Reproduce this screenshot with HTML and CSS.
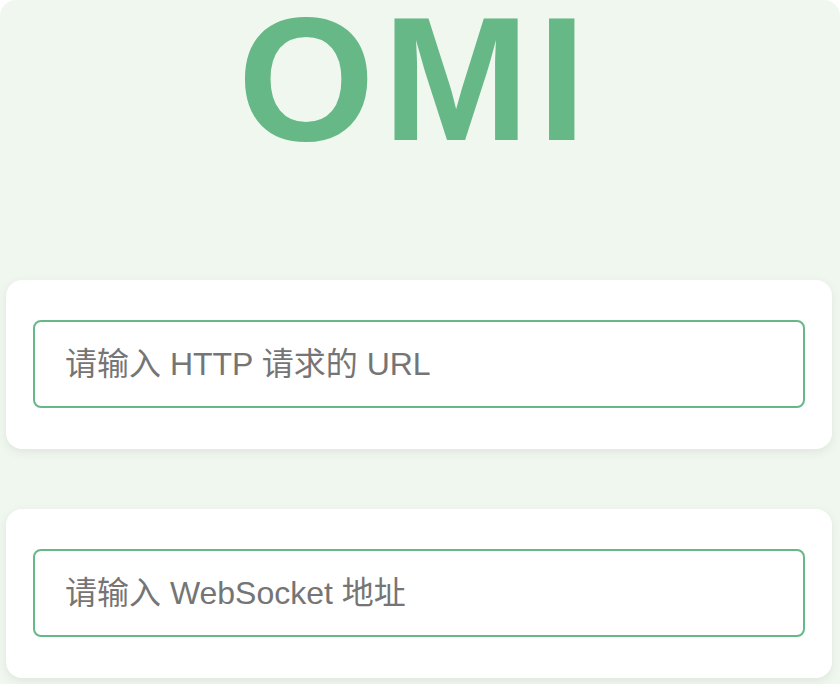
FILE: index.html
```html
<!DOCTYPE html>
<html lang="zh">
<head>
<meta charset="utf-8">
<title>OMI</title>
<link rel="stylesheet" href="styles.css">
</head>
<body>
<div class="app">
  <header class="hero">
    <h1 class="logo">OMI</h1>
  </header>
  <section class="card">
    <input class="field" type="text" placeholder="请输入 HTTP 请求的 URL">
  </section>
  <section class="card">
    <input class="field" type="text" placeholder="请输入 WebSocket 地址">
  </section>
</div>
</body>
</html>
```

FILE: styles.css
```css
html, body {
  margin: 0;
  padding: 0;
  background: #ffffff;
}

.app {
  width: 840px;
  height: 684px;
  box-sizing: border-box;
  background: #f0f7ef;
  border-radius: 16px 16px 0 0;
  padding: 0 8px 0 6px;
  display: flex;
  flex-direction: column;
  gap: 60px;
  overflow: hidden;
  font-family: "Liberation Sans", "Noto Sans CJK SC", sans-serif;
}

.hero {
  height: 220px;
  display: flex;
  justify-content: center;
  align-items: flex-start;
  padding-left: 0;
  padding-right: 6px;
}

.logo {
  margin: 0;
  font-family: "Liberation Sans", Arial, sans-serif;
  font-weight: 700;
  font-size: 176px;
  line-height: 0.9;
  letter-spacing: 8px;
  color: #66b886;
}

.card {
  background: #ffffff;
  border-radius: 16px;
  padding: 40px 27px 41px;
  box-shadow: 0 3px 10px rgba(60, 90, 70, 0.10);
}

.field {
  display: block;
  width: 100%;
  height: 88px;
  box-sizing: border-box;
  border: 2px solid #66b886;
  border-radius: 8px;
  padding: 0 30px;
  font-family: "Liberation Sans", "Noto Sans CJK SC", sans-serif;
  font-size: 32px;
  color: #333;
  background: #fff;
  outline: none;
}

.field::placeholder {
  color: #757575;
  opacity: 1;
}
```
